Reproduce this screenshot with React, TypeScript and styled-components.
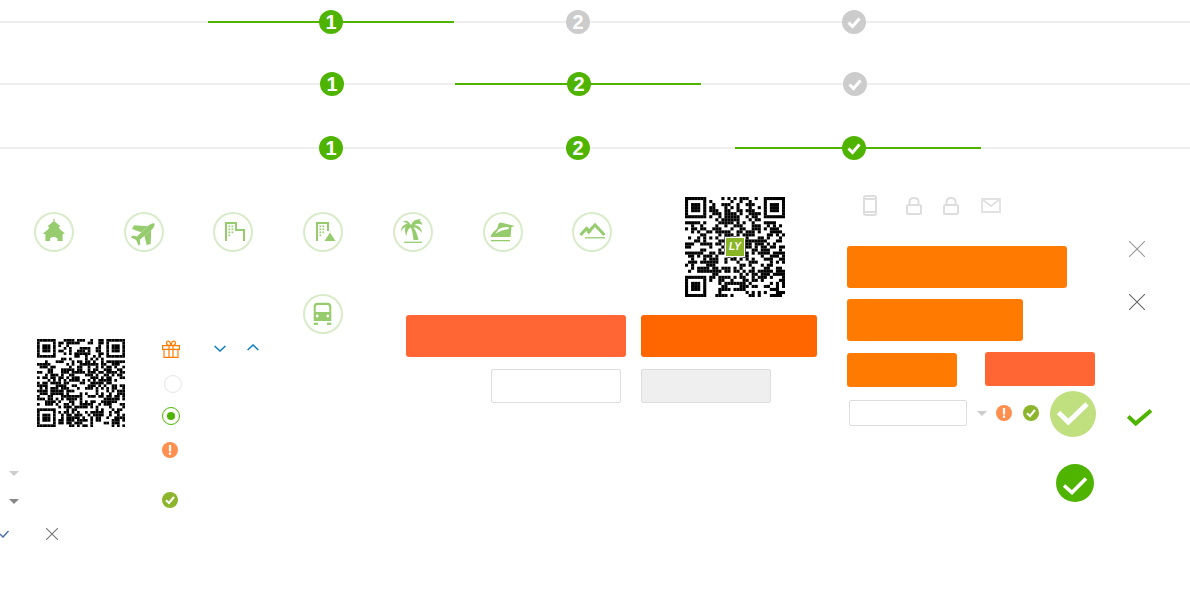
import styled, { createGlobalStyle } from 'styled-components';
import type { ReactNode } from 'react';

const GREEN = '#4fb400';
const LEAF = '#96cc6e';
const ORANGE = '#ff7a00';
const CORAL = '#ff6633';

const GlobalStyle = createGlobalStyle`
  html, body {
    margin: 0;
    padding: 0;
    background: #fff;
    font-family: "Liberation Sans", Arial, sans-serif;
  }
`;

// 33 module code: finder squares are fixed, the rest comes from a small generator
const makeModules = (seed: number) => {
  const size = 33;
  let state = seed;
  const cells: [number, number][] = [];
  const inFinder = (x: number, y: number) =>
    (x < 8 && y < 8) || (x > 24 && y < 8) || (x < 8 && y > 24);
  const finder = (x: number, y: number, ox: number, oy: number) => {
    const dx = x - ox;
    const dy = y - oy;
    if (dx < 0 || dy < 0 || dx > 6 || dy > 6) return false;
    return dx === 0 || dy === 0 || dx === 6 || dy === 6 || (dx > 1 && dx < 5 && dy > 1 && dy < 5);
  };
  for (let y = 0; y < size; y++) {
    for (let x = 0; x < size; x++) {
      state = (state * 1103515245 + 12345) & 0x7fffffff;
      const on = inFinder(x, y)
        ? finder(x, y, 0, 0) || finder(x, y, 26, 0) || finder(x, y, 0, 26)
        : (state >> 16) % 100 < 54;
      if (on) cells.push([x, y]);
    }
  }
  return cells;
};

const QrCode = ({ seed }: { seed: number }) => (
  <svg viewBox="0 0 33 33" width="100%" height="100%">
    {makeModules(seed).map(([x, y]) => (
      <rect key={`${x}-${y}`} x={x} y={y} width={1.02} height={1.02} fill="#000" />
    ))}
  </svg>
);

const steps = [
  { start: 319, barLeft: 208, done: 1 },
  { start: 320, barLeft: 455, done: 2 },
  { start: 319, barLeft: 735, done: 3 },
];

const Windows = ({ x }: { x: number }) => (
  <g fill={LEAF}>
    {[13.5, 16.5, 19.5, 22.5].map((y) =>
      [x, x + 3].map((wx) =>
        y === 22.5 && wx !== x ? null : (
          <rect key={`${wx}-${y}`} x={wx} y={y} width={1.7} height={1.7} />
        )
      )
    )}
  </g>
);

const themeArt: Record<string, ReactNode> = {
  temple: (
    <path
      fill={LEAF}
      d="M19.4 7 H20.6 V9.6 L26.5 14.2 L24.6 15 L26 17.5 L31 21.4 L28.6 22.2 V29 H23.5 V26.5 Q19.8 23 16 26.5 V29 H11.4 V22.2 L9 21.4 L14 17.5 L15.4 15 L13.5 14.2 L19.4 9.6 Z"
    />
  ),
  plane: (
    <g transform="translate(19.5 21.5) rotate(-42)" fill={LEAF}>
      <path d="M-10 -2 L9 -2.8 Q14 -1.8 15 0 Q14 1.8 9 2.8 L-10 2 Z" />
      <path d="M-1 -2.5 L-5.5 -11 L-1.5 -12.5 L8 -2.5 Z M-1 2.5 L-5.5 11 L-1.5 12.5 L8 2.5 Z" />
      <path d="M-10 -1 L-12 -5.5 L-9.5 -5.8 L-6 -1 Z M-10 1 L-12 5.5 L-9.5 5.8 L-6 1 Z" />
    </g>
  ),
  city: (
    <g>
      <path d="M13 29 V11 H23 V18 H31 V29" fill="none" stroke={LEAF} strokeWidth={2} />
      <Windows x={15.5} />
    </g>
  ),
  scenic: (
    <g>
      <path d="M14 29 V11 H25 V19" fill="none" stroke={LEAF} strokeWidth={2} />
      <Windows x={16.5} />
      <path d="M27 20.5 L32.5 29 L21.5 29 Z" fill={LEAF} />
    </g>
  ),
  palm: (
    <g fill={LEAF}>
      <path d="M18 13 Q20 7 28 7 L26.5 8.5 Q29 10 29.5 13 Q25 10.5 21.5 13 Q28 13.5 29 21 Q24 15 20.5 15.5 Q24 20 25.5 28 L20.5 28 Q20 21 18 15.5 Q14 16.5 13.5 24 Q11 19 12.5 15 Q9 16 8 20.5 Q7.5 13 14.5 11.5 Q12.5 9.5 10 10 Q14 6.5 18 13 Z" />
      <rect x={11} y={29.6} width={18} height={1.3} />
    </g>
  ),
  iron: (
    <g fill={LEAF}>
      <path
        fillRule="evenodd"
        d="M7.5 25 Q9 20 14 17 L15.5 12 Q16 10.5 18 10.5 L32 14 L28.5 15 L27.5 25 Z M12.5 21.5 Q19 17.5 25.5 17 L25.8 15 Q20 14.5 16 17 Z"
      />
      <rect x={8} y={28} width={19} height={1.3} />
    </g>
  ),
  peak: (
    <g fill="none" stroke={LEAF}>
      <path d="M8.5 23 L14.5 16.5 L18.5 20.5" strokeWidth={3.2} />
      <path d="M15.5 21 L23 13 L32.5 23" strokeWidth={3} />
      <path d="M13 25.8 H33" strokeWidth={1.3} />
    </g>
  ),
  van: (
    <g>
      <path
        fillRule="evenodd"
        fill={LEAF}
        d="M14 8.7 H25 Q27.5 8.7 28.3 12 V27 H10.7 V12 Q11.5 8.7 14 8.7 Z M14.5 11 Q13 11 12.8 13 L12.7 18 H26.3 L26.2 13 Q26 11 24.5 11 Z"
      />
      <circle cx={14.2} cy={22} r={1.4} fill="#fff" />
      <circle cx={24.8} cy={22} r={1.4} fill="#fff" />
      <rect x={10.7} y={28.7} width={4.3} height={2.2} fill={LEAF} />
      <rect x={24} y={28.7} width={4.3} height={2.2} fill={LEAF} />
    </g>
  ),
};

const ThemeIcon = ({ name }: { name: string }) => (
  <ThemeRing>
    <svg viewBox="0 0 40 40" width="40" height="40">
      {themeArt[name]}
    </svg>
  </ThemeRing>
);

const Warn = () => (
  <RoundIcon $d={16} $bg="#ff8f4f">
    <svg viewBox="0 0 16 16" width="16" height="16">
      <rect x={6.9} y={3} width={2.2} height={6.5} fill="#fff" />
      <rect x={6.9} y={10.6} width={2.2} height={2.2} fill="#fff" />
    </svg>
  </RoundIcon>
);

const OliveCheck = () => (
  <RoundIcon $d={16} $bg="#8cb52c">
    <svg viewBox="0 0 16 16" width="16" height="16">
      <path d="M4 8.3 L7 11 L12 5" fill="none" stroke="#fff" strokeWidth={2.2} />
    </svg>
  </RoundIcon>
);

const Line = ({ w, h, d, color, sw }: { w: number; h: number; d: string; color: string; sw: number }) => (
  <svg viewBox={`0 0 ${w} ${h}`} width={w} height={h} style={{ display: 'block' }}>
    <path d={d} fill="none" stroke={color} strokeWidth={sw} />
  </svg>
);

const Cross = ({ size, color }: { size: number; color: string }) => (
  <Line w={size} h={size} color={color} sw={1.1} d={`M0 0 L${size} ${size} M${size} 0 L0 ${size}`} />
);

const Lock = () => (
  <Line
    w={16}
    h={18}
    color="#ddd"
    sw={2}
    d="M2.5 8 H13.5 Q15 8 15 9.5 V15.5 Q15 17 13.5 17 H2.5 Q1 17 1 15.5 V9.5 Q1 8 2.5 8 Z M3.5 8 V5 Q3.5 1 8 1 Q12.5 1 12.5 5 V8"
  />
);

export default function App() {
  return (
    <Sheet>
      <GlobalStyle />

      <Steppers>
        {steps.map((row) => (
          <StepRow key={row.barLeft} $start={row.start}>
            <StepBar $left={row.barLeft} />
            {[0, 1, 2].map((i) => (
              <StepDot key={i} $on={i < row.done}>
                {i < 2 ? (
                  i + 1
                ) : (
                  <svg viewBox="0 0 24 24" width="24" height="24">
                    <path d="M6.5 12.5 L10.5 16.5 L17.5 8.5" fill="none" stroke="#fff" strokeWidth={3} />
                  </svg>
                )}
              </StepDot>
            ))}
          </StepRow>
        ))}
      </Steppers>

      <Lower>
        <ThemeColumn>
          <ThemeRow>
            {['temple', 'plane', 'city', 'scenic', 'palm', 'iron', 'peak'].map((name) => (
              <ThemeIcon key={name} name={name} />
            ))}
          </ThemeRow>

          <ThemeBelow>
            <LeftPanel>
              <VanSlot>
                <ThemeIcon name="van" />
              </VanSlot>

              <ToolRow>
                <QrColumn>
                  <QrBox $size={88}>
                    <QrCode seed={4242} />
                  </QrBox>
                  <CaretStack>
                    <Caret $color="#ccc" />
                    <Caret $color="#888" />
                  </CaretStack>
                  <MarkRow>
                    <Line w={9} h={8} color="#4a6ea8" sw={1.4} d="M0 4 L3 7 L8.5 1" />
                    <Cross size={12} color="#777" />
                  </MarkRow>
                </QrColumn>

                <StatusColumn>
                  <Line
                    w={18}
                    h={18}
                    color="#ff7d00"
                    sw={1.2}
                    d="M0.6 5.6 H17.4 V9.4 H0.6 Z M2 9.4 V17.4 H16 V9.4 M7 5.6 V17.4 M11 5.6 V17.4 M9 5.6 Q4 5.6 4.5 2.5 Q5.5 0 8 2 L9 5.6 Q14 5.6 13.5 2.5 Q12.5 0 10 2 L9 5.6"
                  />
                  <RadioOff />
                  <RadioOn />
                  <Warn />
                  <OliveCheck />
                </StatusColumn>

                <ChevronRow>
                  <Line w={12} h={8} color="#0a7fc1" sw={1.5} d="M0.6 2 L6 7 L11.4 2" />
                  <Line w={12} h={8} color="#0a7fc1" sw={1.5} d="M0.6 6 L6 1 L11.4 6" />
                </ChevronRow>
              </ToolRow>
            </LeftPanel>

            <ActionColumn>
              <Button $w={220} $h={42} $bg={CORAL} />
              <FieldOffset>
                <Field $w={130} $h={34} />
              </FieldOffset>
            </ActionColumn>
          </ThemeBelow>
        </ThemeColumn>

        <ShareColumn>
          <ShareQr>
            <QrBox $size={100}>
              <QrCode seed={77} />
              <QrBadge>LY</QrBadge>
            </QrBox>
          </ShareQr>
          <Button $w={176} $h={42} $bg="#ff6600" />
          <Field $w={130} $h={34} $muted />
        </ShareColumn>

        <FormColumn>
          <FormIcons>
            <Line
              w={14}
              h={21}
              color="#ddd"
              sw={2}
              d="M3 1 H11 Q13 1 13 3 V18 Q13 20 11 20 H3 Q1 20 1 18 V3 Q1 1 3 1 Z M1 4 H13 M1 17 H13"
            />
            <Lock />
            <Lock />
            <Line w={20} h={15} color="#e2e2e2" sw={1.8} d="M1 1 H19 V14 H1 Z M2 2 L10 8 L18 2" />
          </FormIcons>

          <FormBody>
            <ButtonStack>
              <Button $w={220} $h={42} $bg={ORANGE} />
              <Button $w={176} $h={42} $bg={ORANGE} />
              <ButtonPair>
                <Button $w={110} $h={34} $bg={ORANGE} $nudge={1} />
                <Button $w={110} $h={34} $bg={CORAL} />
              </ButtonPair>

              <StatusRow>
                <StatusGroup>
                  <Field $w={118} $h={26} />
                  <Caret $color="#ccc" />
                  <Warn />
                  <OliveCheck />
                </StatusGroup>
                <RoundIcon $d={46} $bg="#c0df7e">
                  <svg viewBox="0 0 46 46" width="46" height="46">
                    <path d="M8.5 21.5 L18.3 31 L37 13" fill="none" stroke="#fff" strokeWidth={5} />
                  </svg>
                </RoundIcon>
              </StatusRow>

              <BigCheckSlot>
                <RoundIcon $d={38} $bg={GREEN}>
                  <svg viewBox="0 0 38 38" width="38" height="38">
                    <path d="M8 21.5 L16 28.5 L30 14.5" fill="none" stroke="#fff" strokeWidth={3.6} />
                  </svg>
                </RoundIcon>
              </BigCheckSlot>
            </ButtonStack>

            <SideMarks>
              <CrossSlot>
                <Cross size={16} color="#999" />
              </CrossSlot>
              <CrossSlot>
                <Cross size={16} color="#666" />
              </CrossSlot>
              <Line w={26} h={18} color={GREEN} sw={4} d="M1.3 7.5 L8.7 14.5 L24 1.5" />
            </SideMarks>
          </FormBody>
        </FormColumn>
      </Lower>
    </Sheet>
  );
}

const Sheet = styled.div`
  width: 1190px;
  height: 600px;
  overflow: hidden;
  background: #fff;
`;

const Steppers = styled.div`
  display: grid;
  grid-template-rows: 62px 64px 24px;
  padding-top: 10px;
`;

const StepRow = styled.div<{ $start: number }>`
  position: relative;
  display: grid;
  grid-template-columns: 247px 276px 24px;
  align-content: start;
  height: 24px;
  padding-left: ${(p) => p.$start}px;
  &::before {
    content: '';
    position: absolute;
    left: 0;
    right: 0;
    top: 11px;
    height: 2px;
    background: #eee;
  }
`;

const StepBar = styled.div<{ $left: number }>`
  position: absolute;
  left: ${(p) => p.$left}px;
  top: 11px;
  width: 246px;
  height: 2px;
  background: ${GREEN};
`;

const StepDot = styled.div<{ $on: boolean }>`
  position: relative;
  width: 24px;
  height: 24px;
  border-radius: 50%;
  display: flex;
  align-items: center;
  justify-content: center;
  background: ${(p) => (p.$on ? GREEN : '#ccc')};
  color: #fff;
  font-size: 20px;
  font-weight: 700;
  line-height: 24px;
`;

const Lower = styled.div`
  display: flex;
  align-items: flex-start;
`;

const ThemeColumn = styled.div`
  width: 641px;
  padding-top: 52px;
`;

const ThemeRow = styled.div`
  display: grid;
  grid-template-columns: 90px 89px 90px 90px 90px 89px 40px;
  padding-left: 34px;
`;

const ThemeRing = styled.div`
  box-sizing: border-box;
  width: 40px;
  height: 40px;
  border-radius: 50%;
  box-shadow: inset 0 0 0 2px #d8ebc9;
  svg {
    display: block;
  }
`;

const ThemeBelow = styled.div`
  display: flex;
`;

const LeftPanel = styled.div`
  width: 406px;
  padding-top: 42px;
`;

const VanSlot = styled.div`
  padding-left: 303px;
`;

const ToolRow = styled.div`
  display: flex;
  padding-top: 5px;
`;

const QrColumn = styled.div`
  width: 162px;
`;

const QrBox = styled.div<{ $size: number }>`
  position: relative;
  width: ${(p) => p.$size}px;
  height: ${(p) => p.$size}px;
  svg {
    display: block;
  }
  ${QrColumn} & {
    margin-left: 37px;
  }
`;

const QrBadge = styled.div`
  position: absolute;
  left: 41px;
  top: 41px;
  width: 18px;
  height: 18px;
  box-shadow: 0 0 0 1px #fff;
  background: #8ab526;
  color: #fff;
  font-size: 10px;
  font-weight: 700;
  font-style: italic;
  line-height: 18px;
  text-align: center;
`;

const CaretStack = styled.div`
  display: flex;
  flex-direction: column;
  gap: 23px;
  padding: 44px 0 0 9px;
`;

const MarkRow = styled.div`
  display: flex;
  align-items: center;
  gap: 37px;
  height: 12px;
  padding-top: 24px;
`;

const StatusColumn = styled.div`
  display: grid;
  grid-template-rows: 35px 32px 35px 50px 16px;
  width: 52px;
  padding-top: 1px;
`;

const ChevronRow = styled.div`
  display: flex;
  gap: 21px;
  padding-top: 5px;
`;

const ActionColumn = styled.div`
  padding-top: 63px;
`;

const FieldOffset = styled.div`
  padding: 12px 0 0 85px;
`;

const ShareColumn = styled.div`
  display: flex;
  flex-direction: column;
  gap: 12px;
  width: 206px;
  padding-top: 37px;
`;

const ShareQr = styled.div`
  padding: 0 0 6px 44px;
`;

const FormColumn = styled.div`
  flex: 1;
  padding-top: 35px;
`;

const FormIcons = styled.div`
  display: grid;
  grid-template-columns: 43px 37px 38px 20px;
  align-items: center;
  height: 21px;
  padding-left: 16px;
`;

const FormBody = styled.div`
  display: flex;
  padding-top: 25px;
`;

const ButtonStack = styled.div`
  display: flex;
  flex-direction: column;
  gap: 11px;
  width: 280px;
  padding-top: 5px;
`;

const ButtonPair = styled.div`
  display: flex;
  align-items: flex-start;
  gap: 28px;
`;

const StatusRow = styled.div`
  display: flex;
  align-items: center;
  height: 46px;
  margin-top: -7px;
`;

const StatusGroup = styled.div`
  display: grid;
  grid-template-columns: 128px 19px 27px 27px;
  align-items: center;
  padding: 0 0 2px 2px;
`;

const BigCheckSlot = styled.div`
  padding: 16px 0 0 209px;
`;

const SideMarks = styled.div`
  display: grid;
  grid-template-rows: 53px 115px 18px;
`;

const CrossSlot = styled.div`
  padding-left: 2px;
`;

const RoundIcon = styled.div<{ $d: number; $bg: string }>`
  width: ${(p) => p.$d}px;
  height: ${(p) => p.$d}px;
  border-radius: 50%;
  background: ${(p) => p.$bg};
  svg {
    display: block;
  }
`;

const Button = styled.div<{ $w: number; $h: number; $bg: string; $nudge?: number }>`
  width: ${(p) => p.$w}px;
  height: ${(p) => p.$h}px;
  margin-top: ${(p) => p.$nudge ?? 0}px;
  border-radius: 3px;
  background: ${(p) => p.$bg};
`;

const Field = styled.div<{ $w: number; $h: number; $muted?: boolean }>`
  box-sizing: border-box;
  width: ${(p) => p.$w}px;
  height: ${(p) => p.$h}px;
  border: 1px solid #ddd;
  border-radius: 2px;
  background: ${(p) => (p.$muted ? '#efefef' : '#fff')};
`;

const Caret = styled.div<{ $color: string }>`
  width: 0;
  height: 0;
  border-left: 5px solid transparent;
  border-right: 5px solid transparent;
  border-top: 5px solid ${(p) => p.$color};
`;

const RadioOff = styled.div`
  box-sizing: border-box;
  width: 18px;
  height: 18px;
  margin-left: 2px;
  border: 1px solid #e5e5e5;
  border-radius: 50%;
`;

const RadioOn = styled.div`
  box-sizing: border-box;
  display: flex;
  align-items: center;
  justify-content: center;
  width: 18px;
  height: 18px;
  border: 1px solid ${GREEN};
  border-radius: 50%;
  &::after {
    content: '';
    width: 8px;
    height: 8px;
    border-radius: 50%;
    background: ${GREEN};
  }
`;
